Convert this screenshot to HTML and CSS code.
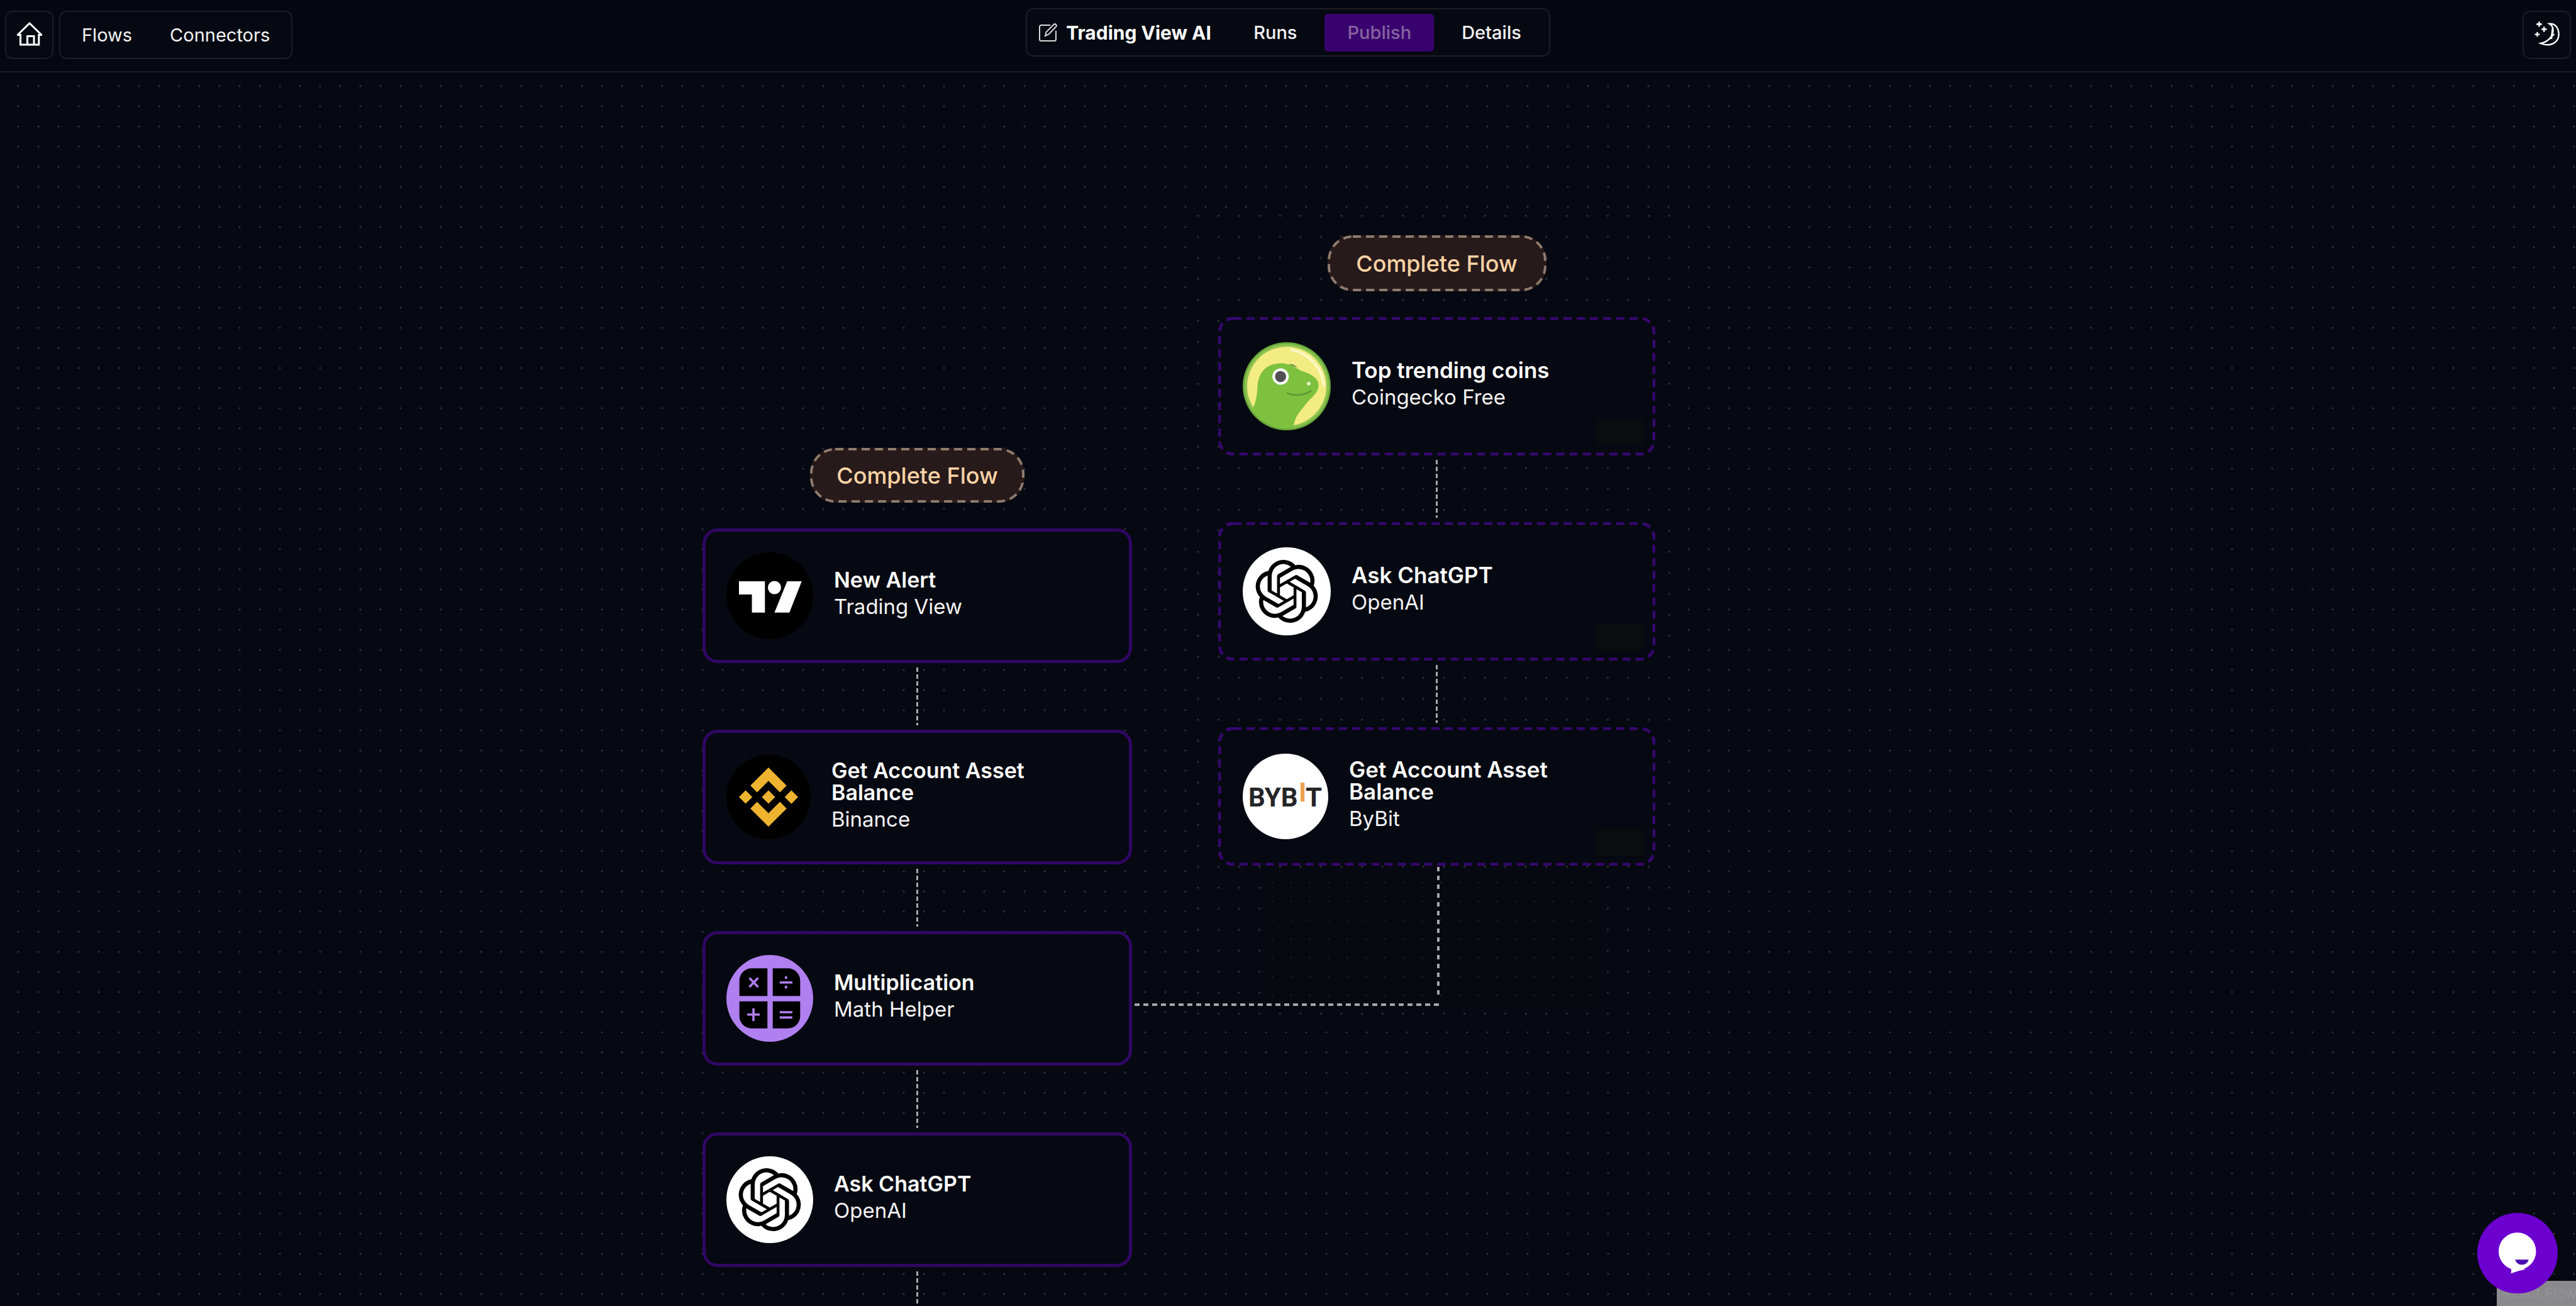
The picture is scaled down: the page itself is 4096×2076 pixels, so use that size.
FILE: index.html
```html
<!DOCTYPE html>
<html lang="en">
<head>
<meta charset="utf-8">
<title>Trading View AI</title>
<link rel="stylesheet" href="styles.css">
</head>
<body>
<svg class="sprite" aria-hidden="true">
  <symbol id="openai" viewBox="0 0 24 24"><path d="M22.2819 9.8211a5.9847 5.9847 0 0 0-.5157-4.9108 6.0462 6.0462 0 0 0-6.5098-2.9A6.0651 6.0651 0 0 0 4.9807 4.1818a5.9847 5.9847 0 0 0-3.9977 2.9 6.0462 6.0462 0 0 0 .7427 7.0966 5.98 5.98 0 0 0 .511 4.9107 6.051 6.051 0 0 0 6.5146 2.9001A5.9847 5.9847 0 0 0 13.2599 24a6.0557 6.0557 0 0 0 5.7718-4.2058 5.9894 5.9894 0 0 0 3.9977-2.9001 6.0557 6.0557 0 0 0-.7475-7.0729zm-9.022 12.6081a4.4755 4.4755 0 0 1-2.8764-1.0408l.1419-.0804 4.7783-2.7582a.7948.7948 0 0 0 .3927-.6813v-6.7369l2.02 1.1686a.071.071 0 0 1 .038.052v5.5826a4.504 4.504 0 0 1-4.4945 4.4944zm-9.6607-4.1254a4.4708 4.4708 0 0 1-.5346-3.0137l.142.0852 4.783 2.7582a.7712.7712 0 0 0 .7806 0l5.8428-3.3685v2.3324a.0804.0804 0 0 1-.0332.0615L9.74 19.9502a4.4992 4.4992 0 0 1-6.1408-1.6464zM2.3408 7.8956a4.485 4.485 0 0 1 2.3655-1.9728V11.6a.7664.7664 0 0 0 .3879.6765l5.8144 3.3543-2.0201 1.1685a.0757.0757 0 0 1-.071 0l-4.8303-2.7865A4.504 4.504 0 0 1 2.3408 7.872zm16.5963 3.8558L13.1038 8.364 15.1192 7.2a.0757.0757 0 0 1 .071 0l4.8303 2.7913a4.4944 4.4944 0 0 1-.6765 8.1042v-5.6772a.79.79 0 0 0-.407-.667zm2.0107-3.0231l-.142-.0852-4.7735-2.7818a.7759.7759 0 0 0-.7854 0L9.409 9.2297V6.8974a.0662.0662 0 0 1 .0284-.0615l4.8303-2.7866a4.4992 4.4992 0 0 1 6.6802 4.66zM8.3065 12.863l-2.02-1.1638a.0804.0804 0 0 1-.038-.0567V6.0742a4.4992 4.4992 0 0 1 7.3757-3.4537l-.142.0805L8.704 5.459a.7948.7948 0 0 0-.3927.6813zm1.0976-2.3654l2.602-1.4998 2.6069 1.4998v2.9994l-2.5974 1.4997-2.6067-1.4997Z"/></symbol>
</svg>

<header class="topbar">
  <nav class="topbar-left">
    <a class="square" href="#home" aria-label="Home">
      <svg class="icon-home" viewBox="0 0 40 38"><path d="M1 20.500 20 2l19 18.500h-4.200V36H5.500V20.500z M16.500 36V22.500h10.500V36"/></svg>
    </a>
    <div class="links">
      <a href="#flows">Flows</a>
      <a href="#connectors">Connectors</a>
    </div>
  </nav>
  <div class="flow-bar">
    <label class="flow-name">
      <svg class="icon-edit" viewBox="0 0 30 30"><path d="M19 3H4.500A2.500 2.500 0 0 0 2 5.500v20A2.500 2.500 0 0 0 4.500 28h21a2.500 2.500 0 0 0 2.500-2.500V12"/><path d="M11 20l1.500-6L24.500 2a2 2 0 0 1 3.500 3.500L16.500 17.500z"/></svg>
      <input type="text" value="Trading View AI" aria-label="Flow name">
    </label>
    <div class="actions">
      <button class="tab" type="button">Runs</button>
      <button class="tab publish" type="button" disabled>Publish</button>
      <button class="tab" type="button">Details</button>
    </div>
  </div>
  <div class="topbar-right">
    <button class="square" type="button" aria-label="Toggle theme">
      <svg class="icon-moon" viewBox="498 112 140 140">
        <path class="moon-line" d="M580 128c32-3 50 24 50 56 0 42-42 69-96 48 34-6 66-34 66-70 0-14-6-26-20-34z"/>
        <path class="moon-fill" d="M594 146c4 10 5 22 2 34l14 4-14 14 0 10-16 2c-14 14-28 22-44 24 20-14 44-22 52-42z"/>
        <path class="moon-fill" d="M522 116h8v9h10v10h-10v9h-8v-9h-10v-10h10zM548 144h8v9h10v9h-10v9h-8v-9h-9v-9h9zM512 172h8v8h9v8h-9v8h-8v-8h-9v-8h9z"/>
      </svg>
    </button>
  </div>
</header>

<main class="canvas">
  <div class="grid-patch patch-main"></div>
  <div class="grid-patch patch-faint"></div>

  <section class="flow flow-a">
    <div class="badge"><svg class="outline"><rect/></svg>Complete Flow</div>
    <article class="node">
      <svg class="logo" viewBox="0 0 100 100"><circle cx="50" cy="50" r="50"/><path fill="#fff" d="M14.500 33.300h29.900v36.100H29.400V48.500H14.500zM70 33.300h16.800L72.600 69.400H55.400z"/><circle cx="55.400" cy="40.600" r="7.600" fill="#fff"/></svg>
      <div class="text"><h2>New Alert</h2><p>Trading View</p></div>
    </article>
    <div class="link"></div>
    <article class="node">
      <svg class="logo logo-small" viewBox="-5.100 -5.100 34.200 34.200"><circle cx="12" cy="12" r="17.100"/><path fill="#eeb42f" d="M16.624 13.9202l2.7175 2.7154-7.353 7.353-7.353-7.352 2.7175-2.7164 4.6355 4.6595 4.6356-4.6595zm4.6366-4.6366L24 12l-2.7154 2.7164L18.5682 12l2.6924-2.7164zm-9.272.001l2.7163 2.6914-2.7164 2.7174v-.001L9.2721 12l2.7164-2.7154zm-9.2722-.001L5.4088 12l-2.6914 2.6924L0 12l2.7164-2.7164zM11.9885.0115l7.353 7.329-2.7174 2.7154-4.6356-4.6356-4.6355 4.6595-2.7174-2.7154 7.353-7.353z"/></svg>
      <div class="text"><h2>Get Account Asset Balance</h2><p>Binance</p></div>
    </article>
    <div class="link"></div>
    <article class="node">
      <svg class="logo" viewBox="0 0 100 100"><circle cx="50" cy="50" r="50" fill="#b07ff0"/><path d="M47.300 15.400v31.900H15V29.400a14 14 0 0 1 14-14zM53.400 15.400H71a14 14 0 0 1 14 14v17.900H53.400zM15 53.400h32.300v31.200H29a14 14 0 0 1-14-14zM53.400 53.400H85v17.200a14 14 0 0 1-14 14H53.400z"/><path fill="none" stroke="#b07ff0" stroke-width="2.600" d="M26.500 26.500l10 10.500m0-10.500l-10 10.500M61.500 31.700H76M24 68.700h14.500M31.200 61.500V76M61.500 66H76M61.500 72H76M68.700 24.500v3M68.700 35.500v3"/></svg>
      <div class="text"><h2>Multiplication</h2><p>Math Helper</p></div>
    </article>
    <div class="link"></div>
    <article class="node">
      <div class="logo logo-white"><svg class="mark"><use href="#openai"/></svg></div>
      <div class="text"><h2>Ask ChatGPT</h2><p>OpenAI</p></div>
    </article>
    <div class="link"></div>
  </section>

  <section class="flow flow-b">
    <div class="badge"><svg class="outline"><rect/></svg>Complete Flow</div>
    <article class="node">
      <svg class="outline"><rect/></svg>
      <svg class="logo" viewBox="0 0 100 100">
        <defs><clipPath id="coin"><circle cx="50" cy="50" r="48"/></clipPath></defs>
        <circle cx="50" cy="50" r="50" fill="#69a83b"/><circle cx="50" cy="50" r="48" fill="#8dc351"/><circle cx="50" cy="50" r="45" fill="#f3ec82"/>
        <path clip-path="url(#coin)" fill="#7dc13f" d="M5 76h6c4-8 5-14 5.500-22 .5-10 2-16 6-21 5-6 13-9.500 22-9 8 .3 14 4 20 7.500 5 2.500 9 3 13 5.500 6 3.500 9.500 8 8.500 14-1.500 8-9 12-15 20-8 10-13 15-13.500 29v5H5z"/>
        <path fill="none" stroke="#fbf7c5" stroke-width="3" stroke-linecap="round" d="M55 8.500C76 13 90 28 92 49"/>
        <circle cx="43" cy="39" r="9.300" fill="#fff"/><circle cx="43" cy="39" r="6.300" fill="#505054"/><circle cx="75" cy="47" r="2" fill="#eef6d0"/>
        <path fill="none" stroke="#5d9b33" stroke-width="2" d="M50 57.500c8 4 20 3 28-2.500"/><path fill="#5b8a3c" d="M52 25q6-1 10 4z"/>
      </svg>
      <div class="text"><h2>Top trending coins</h2><p>Coingecko Free</p></div>
      <span class="slot"></span>
    </article>
    <div class="link"></div>
    <article class="node">
      <svg class="outline"><rect/></svg>
      <div class="logo logo-white"><svg class="mark"><use href="#openai"/></svg></div>
      <div class="text"><h2>Ask ChatGPT</h2><p>OpenAI</p></div>
      <span class="slot"></span>
    </article>
    <div class="link"></div>
    <article class="node">
      <svg class="outline"><rect/></svg>
      <svg class="logo logo-bybit" viewBox="0 0 136 136"><circle cx="68" cy="68" r="68" fill="#fff"/><text x="9" y="84">BYB</text><text class="orange" x="89" y="76">I</text><text x="100" y="84">T</text></svg>
      <div class="text"><h2>Get Account Asset Balance</h2><p>ByBit</p></div>
      <span class="slot"></span>
    </article>
  </section>

  <div class="branch-down"></div>
  <div class="branch-across"></div>

  <a class="attribution" href="#attribution">React Flow</a>
  <button class="chat" type="button" aria-label="Open chat">
    <svg viewBox="200 167 434 434"><circle cx="416" cy="374" r="101" fill="#fff"/><path fill="#fff" d="M374 455q14 12 7 38 40-16 80-22z"/><path fill="#4a0bb0" d="M404 419h73q-8 28-36 28t-37-28z"/></svg>
  </button>
</main>
</body>
</html>
```

FILE: styles.css
```css
* { box-sizing: border-box; }

body {
  margin: 0;
  min-height: 100vh;
  display: flex;
  flex-direction: column;
  background: #060911;
  color: #f4f4f6;
  font-family: Inter, "Liberation Sans", sans-serif;
}

h2, p { margin: 0; }
a { color: inherit; text-decoration: none; }
button, input { font: inherit; color: inherit; padding: 0; border: 0; background: none; }
.sprite { display: none; }

/* Top bar */
.topbar {
  display: grid;
  grid-template-columns: 1fr auto 1fr;
  align-items: start;
  padding: 13px 8px 19px;
  border-bottom: 2px solid #1c1e27;
  background: #050812;
  font-size: 29px;
  line-height: 36px;
}
.topbar-left { display: flex; gap: 9px; padding-top: 4px; }
.topbar-right { display: flex; justify-content: flex-end; padding-top: 4px; }
.square, .links, .flow-bar {
  height: 77px;
  border: 2px solid #1c1e27;
  border-radius: 12px;
  background: #060911;
}
.square { width: 77px; display: flex; align-items: center; justify-content: center; padding-bottom: 4px; }
.links { display: flex; align-items: center; gap: 60px; padding: 0 34px; }
.icon-home { width: 40px; height: 38px; fill: none; stroke: #fff; stroke-width: 3; }
.icon-moon { width: 42px; height: 42px; }
.moon-line { fill: none; stroke: #fff; stroke-width: 8; }
.moon-fill { fill: #fff; }

.flow-bar { display: flex; align-items: center; padding: 0 8px 0 18px; }
.flow-name { display: flex; align-items: center; gap: 14px; font-weight: 700; }
.flow-name input { width: 232px; height: 40px; font-size: 30px; outline: 0; color: #fff; }
.icon-edit { width: 30px; height: 30px; fill: none; stroke: #d8d8dc; stroke-width: 2; }
.actions { display: flex; gap: 8px; margin-left: 30px; }
.tab { height: 60px; padding: 0 36px; border-radius: 6px; font-weight: 500; }
.publish { background: #39036f; color: #86639f; }

/* Canvas */
.canvas {
  flex: 1;
  position: relative;
  overflow: hidden;
  background: radial-gradient(circle at 16px 16px, #2f343b 1px, transparent 2px) 13px 6px / 32px 32px #060911;
}
.grid-patch { position: absolute; background-color: #060911; background-repeat: round; }
.patch-main {
  left: calc(50% - 160px); top: 221px; width: 782px; height: 1302px;
  background-image: radial-gradient(circle at 17px 7px, #31363d 1px, transparent 2px);
  background-size: 33px 33px;
}
.patch-faint {
  left: calc(50% - 40px); top: 1279px; width: 536px; height: 209px;
  background-color: #070910;
  background-image: radial-gradient(circle at 15px 9px, #1b1f25 1px, transparent 2px);
  background-size: 30px 30px;
}

.flow { position: absolute; display: flex; flex-direction: column; align-items: center; }
.flow-a { left: calc(50% - 931px); top: 597px; width: 683px; }
.flow-b { left: calc(50% - 111px); top: 259px; width: 695px; }

.outline { position: absolute; inset: 0; width: 100%; height: 100%; pointer-events: none; }
.outline rect {
  x: 2px; y: 2px;
  width: calc(100% - 4px); height: calc(100% - 4px);
  rx: 22px;
  fill: none; stroke: #35076e; stroke-width: 5; stroke-dasharray: 13 8;
}

.badge {
  position: relative;
  display: flex; align-items: center; justify-content: center;
  width: 341px; height: 87px; margin-bottom: 41px;
  border-radius: 40px;
  background: #271a1b;
  color: #fbd3a5;
  font-size: 36px; font-weight: 500;
}
.badge .outline rect { rx: 38px; stroke: #8f7b6e; stroke-width: 4; }
.flow-b .badge { width: 348px; height: 89px; }

.node {
  position: relative;
  align-self: stretch;
  display: flex; align-items: center; gap: 33px;
  height: 214px; padding: 0 33px;
  border: 5px solid #300763; border-radius: 24px;
  background: #060911;
}
.flow-b .node { height: 220px; padding: 0 39px; border: 0; }

.logo { flex: none; width: 138px; height: 138px; }
.logo-small { width: 134px; height: 134px; }
.flow-b .logo { width: 140px; height: 140px; }
.flow-b .logo-bybit { width: 136px; height: 136px; }
.logo-bybit text { font: 700 42px Roboto, sans-serif; fill: #252527; }
.logo-bybit .orange { fill: #eda04f; }
.logo-white { display: flex; align-items: center; justify-content: center; border-radius: 50%; background: #fff; }
.mark { width: 100px; height: 100px; }

.text { width: 330px; font-size: 33px; line-height: 51px; }
.text h2 { font-size: 34px; line-height: 35px; font-weight: 600; color: #fff; }
.flow-b .text h2 { font-size: 35px; }
.slot { position: absolute; right: 18px; bottom: 16px; width: 77px; height: 42px; background: #0b0c10; }

/* Edges */
.link {
  width: 3px; height: 92px; margin: 7px 0;
  background: repeating-linear-gradient(#a6a7ab 0 7px, transparent 7px 11px);
}
.branch-down {
  position: absolute; left: calc(50% + 237px); top: 1263px; width: 4px; height: 206px;
  background: repeating-linear-gradient(#a6a8ae 0 7px, transparent 7px 14px);
}
.branch-across {
  position: absolute; left: calc(50% - 244px); top: 1480px; width: 485px; height: 4px;
  background: repeating-linear-gradient(90deg, #a6a8ae 0 8px, transparent 8px 14px);
}

/* Corner widgets */
.attribution {
  position: absolute; right: 0; bottom: 0; width: 126px; height: 40px; padding-left: 8px;
  overflow: hidden; white-space: nowrap;
  background: #8a898d; color: #949397; font-size: 23px; line-height: 40px;
}
.chat {
  position: absolute; right: 29px; bottom: 20px; width: 128px; height: 128px;
  border-radius: 50%; background: #6c00cf;
}
.chat svg { display: block; width: 100%; height: 100%; }
```
